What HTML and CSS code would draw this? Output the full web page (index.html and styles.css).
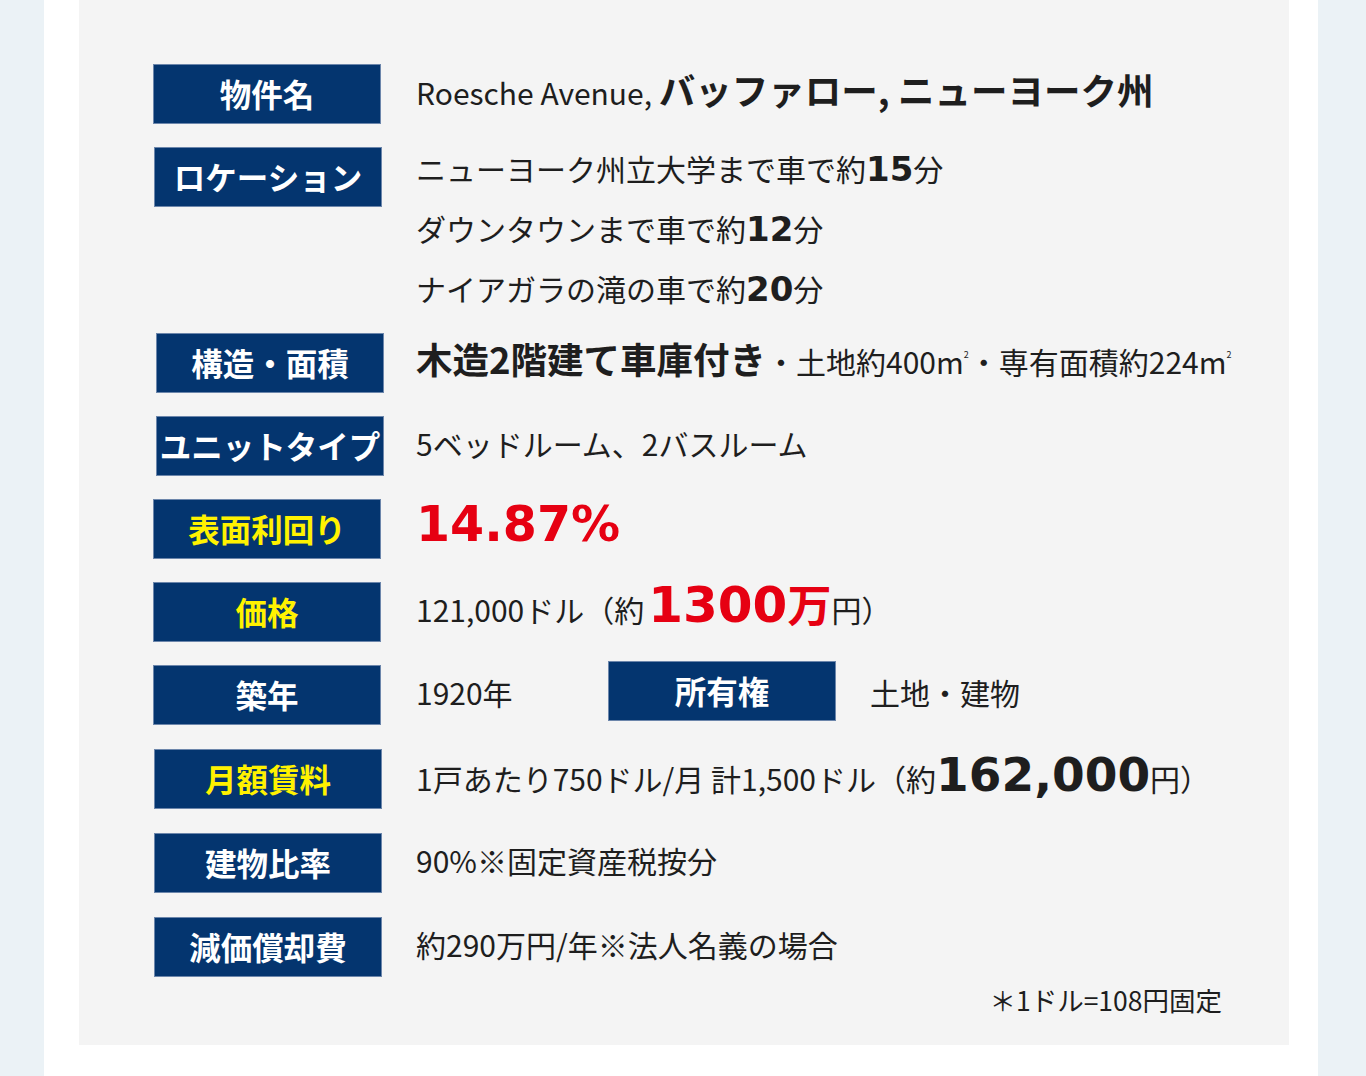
FILE: index.html
```html
<!DOCTYPE html>
<html lang="ja">
<head>
<meta charset="utf-8">
<title>物件概要</title>
<link rel="stylesheet" href="styles.css">
</head>
<body>
<div class="page">
  <div class="panel">
    <div class="rows">
      <div class="row">
        <div class="label">物件名</div>
        <div class="value">Roesche Avenue, <span class="strong">バッファロー, ニューヨーク州</span></div>
      </div>
      <div class="row row-loc">
        <div class="label label-loc">ロケーション</div>
        <div class="value value-loc">
          <div class="line">ニューヨーク州立大学まで車で約<span class="num-b">15</span>分</div>
          <div class="line">ダウンタウンまで車で約<span class="num-b">12</span>分</div>
          <div class="line">ナイアガラの滝の車で約<span class="num-b">20</span>分</div>
        </div>
      </div>
      <div class="row row-shift">
        <div class="label">構造・面積</div>
        <div class="value"><span class="strong">木造2階建て車庫付き</span>・土地約400m<span class="sq">2</span>・専有面積約224m<span class="sq">2</span></div>
      </div>
      <div class="row row-shift">
        <div class="label">ユニットタイプ</div>
        <div class="value">5ベッドルーム、2バスルーム</div>
      </div>
      <div class="row">
        <div class="label hl">表面利回り</div>
        <div class="value"><span class="big big-yield red">14.87%</span></div>
      </div>
      <div class="row">
        <div class="label hl">価格</div>
        <div class="value">121,000ドル（約<span class="big big-price red">1300</span><span class="man red">万</span>円）</div>
      </div>
      <div class="row">
        <div class="label">築年</div>
        <div class="value value-year">1920年</div>
        <div class="label label-up">所有権</div>
        <div class="value value-own">土地・建物</div>
      </div>
      <div class="row row-gap">
        <div class="label hl">月額賃料</div>
        <div class="value">1戸あたり750ドル/月 計1,500ドル（約<span class="big">162,000</span>円）</div>
      </div>
      <div class="row row-gap">
        <div class="label">建物比率</div>
        <div class="value">90%※固定資産税按分</div>
      </div>
      <div class="row row-gap">
        <div class="label">減価償却費</div>
        <div class="value">約290万円/年※法人名義の場合</div>
      </div>
    </div>
    <p class="note">＊1ドル=108円固定</p>
  </div>
</div>
</body>
</html>
```
FILE: styles.css
```css
html, body {
  margin: 0;
  padding: 0;
}
body {
  background: #ebf2f6;
  font-family: "Noto Sans CJK JP", "Noto Sans", sans-serif;
  color: #1e1e1e;
}
.page {
  width: 1274px;
  margin-left: 44px;
  min-height: 1076px;
  background: #ffffff;
  padding: 0 29px 0 35px;
  box-sizing: border-box;
}
.panel {
  background: #f4f4f4;
  padding: 64px 67px 30px 74px;
}
.rows {
  display: flex;
  flex-direction: column;
  gap: 23px;
}
.row {
  display: flex;
  align-items: center;
}
.label {
  flex: none;
  width: 228px;
  height: 60px;
  box-sizing: border-box;
  border: 1px solid #6c86ab;
  background: #04356f;
  color: #ffffff;
  font-weight: 700;
  font-size: 31.5px;
  line-height: 56px;
  text-align: center;
  white-space: nowrap;
  letter-spacing: 0;
}
.label.hl {
  color: #fff200;
}
.value {
  margin-left: 35px;
  margin-bottom: 6px;
  font-size: 30px;
  line-height: 40px;
  white-space: nowrap;
}
.strong {
  font-size: 36.5px;
  font-weight: 700;
}
.row-loc {
  align-items: flex-start;
  margin-bottom: -8px;
}
.label-loc {
  margin-left: 1px;
}
.value-loc {
  margin-top: -9px;
  margin-left: 34px;
  margin-bottom: 0;
}
.line {
  height: 60px;
  line-height: 60px;
}
.num-b {
  font-family: "DejaVu Sans", sans-serif;
  font-weight: 700;
  font-size: 34px;
}
.row-shift .label {
  margin-left: 3px;
}
.row-shift .value {
  margin-left: 32px;
}
.sq {
  font-size: 9px;
  vertical-align: 16px;
  line-height: 0;
}
.big {
  font-family: "DejaVu Sans", sans-serif;
  font-weight: 700;
  font-size: 47px;
}
.big-yield {
  font-size: 49px;
}
.big-price {
  font-size: 50px;
  line-height: 0;
  margin-left: 4px;
}
.red {
  color: #e60012;
}
.man {
  font-weight: 700;
  font-size: 44px;
  line-height: 0;
}
.value-year {
  width: 192px;
}
.value-own {
  margin-left: 34px;
}
.label-up {
  margin-top: -8px;
}
.row-gap {
  margin-top: 1px;
}
.row-gap .label {
  margin-left: 1px;
}
.row-gap .value {
  margin-left: 34px;
}
.note {
  margin: 8px 0 0;
  text-align: right;
  font-size: 26.5px;
  line-height: 30px;
}
```
